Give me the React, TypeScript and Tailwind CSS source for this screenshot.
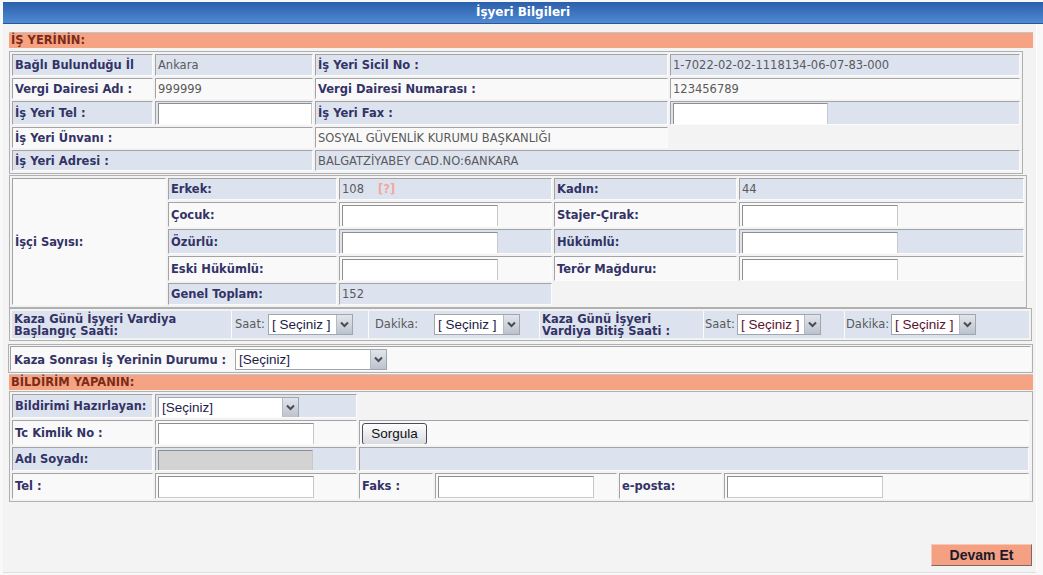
import React from "react";

const CB =
  "flex items-center border border-t-[#a3a3a3] border-l-[#a3a3a3] border-b-[#fbfbfb] border-r-[#fbfbfb] pl-[2px] pt-[2px] overflow-hidden whitespace-nowrap";
const BL = "bg-[#dce3ef]";
const WH = "bg-[#f9f9f9]";
const LBL = "font-bold text-[#333366]";
const VAL = "text-[#5a5a5a]";

function TextBox({ className }: { className: string }) {
  return (
    <div
      className={`border border-t-[#8e8e8e] border-l-[#8e8e8e] border-b-[#c8c8c8] border-r-[#c8c8c8] ${className}`}
    />
  );
}

function Select({
  className,
  text,
  color,
}: {
  className: string;
  text: string;
  color: string;
}) {
  return (
    <div className={`flex h-[21px] items-stretch border border-[#9fa6b0] bg-white ${className}`}>
      <span
        className={`flex-1 pl-[3px] leading-[19px] text-[13.5px] font-['Liberation_Sans',Arial,sans-serif] whitespace-nowrap overflow-hidden ${color}`}
      >
        {text}
      </span>
      <span className="w-[16px] flex items-center justify-center bg-gradient-to-b from-[#e2e5eb] to-[#bcc2cc] border-l border-[#b5bbc4]">
        <svg width="9" height="7" viewBox="0 0 9 7">
          <polyline points="1,1.5 4.5,5 8,1.5" fill="none" stroke="#4a4a58" strokeWidth="2" />
        </svg>
      </span>
    </div>
  );
}

function Orange({ text }: { text: string }) {
  return (
    <div className="ml-[6px] w-[1024px] h-[16px] border-t border-t-[#c4c4c4] bg-[#f6a383] pl-[2px] leading-[15px] font-bold text-[#7b2b18]">
      {text}
    </div>
  );
}

export default function App() {
  return (
    <div className="w-[1043px] h-[575px] bg-[#f8f8f8] font-['DejaVu_Sans',Verdana,sans-serif] text-[11.5px] overflow-hidden">
      {/* header */}
      <div className="ml-[3px] mt-[2px] h-[22px] bg-gradient-to-b from-[#2c5fab] to-[#4f8ad3] border-b border-b-[#2a5596] text-center leading-[21px] font-bold text-[12px] text-white">
        İşyeri Bilgileri
      </div>

      <div className="ml-[3px] w-[1034px] h-[549px] bg-[#f3f3f3] border-r border-r-white border-b border-b-[#e0e0e0] pt-[8px]">
        <Orange text="İŞ YERİNİN:" />

        {/* table 1 */}
        <div className="ml-[6px] mt-[3px] w-[1014px] border border-[#b0b0b0] p-[2px]">
          <div className="grid grid-cols-[141px_158px_353px_350px] gap-[2px]">
            <div className={`${CB} ${BL} h-[22px] ${LBL}`}>Bağlı Bulunduğu İl</div>
            <div className={`${CB} ${BL} h-[22px] ${VAL}`}>Ankara</div>
            <div className={`${CB} ${BL} h-[22px] ${LBL}`}>İş Yeri Sicil No :</div>
            <div className={`${CB} ${BL} h-[22px] ${VAL}`}>1-7022-02-02-1118134-06-07-83-000</div>

            <div className={`${CB} ${WH} h-[21px] ${LBL}`}>Vergi Dairesi Adı :</div>
            <div className={`${CB} ${WH} h-[21px] ${VAL}`}>999999</div>
            <div className={`${CB} ${WH} h-[21px] ${LBL}`}>Vergi Dairesi Numarası :</div>
            <div className={`${CB} ${WH} h-[21px] ${VAL}`}>123456789</div>

            <div className={`${CB} ${BL} h-[24px] ${LBL}`}>İş Yeri Tel :</div>
            <div className={`${CB} ${BL} h-[24px] pl-[1px] pt-0`}>
              <TextBox className="w-[155px] h-[22px] bg-white" />
            </div>
            <div className={`${CB} ${BL} h-[24px] ${LBL}`}>İş Yeri Fax :</div>
            <div className={`${CB} ${BL} h-[24px] pl-[1px] pt-0`}>
              <TextBox className="w-[155px] h-[22px] bg-white" />
            </div>

            <div className={`${CB} ${WH} h-[21px] col-span-2 ${LBL}`}>İş Yeri Ünvanı :</div>
            <div className={`${CB} ${WH} h-[21px] ${VAL}`}>SOSYAL GÜVENLİK KURUMU BAŞKANLIĞI</div>
            <div className="h-[21px]" />

            <div className={`${CB} ${BL} h-[21px] col-span-2 ${LBL}`}>İş Yeri Adresi :</div>
            <div className={`${CB} ${BL} h-[21px] col-span-2 ${VAL}`}>BALGATZİYABEY CAD.NO:6ANKARA</div>
          </div>
        </div>

        {/* table 2 */}
        <div className="ml-[6px] mt-[1px] w-[1018px] border border-[#b0b0b0] p-[2px]">
          <div className="grid grid-cols-[154px_169px_213px_183px_285px] gap-[2px]">
            <div className={`${CB} ${WH} row-span-5 ${LBL}`}>İşçi Sayısı:</div>

            <div className={`${CB} ${BL} h-[22px] ${LBL}`}>Erkek:</div>
            <div className={`${CB} ${BL} h-[22px] ${VAL}`}>
              108<span className="ml-[14px] font-bold text-[#f2a7a0]">[?]</span>
            </div>
            <div className={`${CB} ${BL} h-[22px] ${LBL}`}>Kadın:</div>
            <div className={`${CB} ${BL} h-[22px] ${VAL}`}>44</div>

            <div className={`${CB} ${WH} h-[25px] ${LBL}`}>Çocuk:</div>
            <div className={`${CB} ${WH} h-[25px] pl-[1px] pt-0`}>
              <TextBox className="w-[156px] h-[22px] bg-white" />
            </div>
            <div className={`${CB} ${WH} h-[25px] ${LBL}`}>Stajer-Çırak:</div>
            <div className={`${CB} ${WH} h-[25px] pl-[1px] pt-0`}>
              <TextBox className="w-[156px] h-[22px] bg-white" />
            </div>

            <div className={`${CB} ${BL} h-[25px] ${LBL}`}>Özürlü:</div>
            <div className={`${CB} ${BL} h-[25px] pl-[1px] pt-0`}>
              <TextBox className="w-[156px] h-[22px] bg-white" />
            </div>
            <div className={`${CB} ${BL} h-[25px] ${LBL}`}>Hükümlü:</div>
            <div className={`${CB} ${BL} h-[25px] pl-[1px] pt-0`}>
              <TextBox className="w-[156px] h-[22px] bg-white" />
            </div>

            <div className={`${CB} ${WH} h-[25px] ${LBL}`}>Eski Hükümlü:</div>
            <div className={`${CB} ${WH} h-[25px] pl-[1px] pt-0`}>
              <TextBox className="w-[156px] h-[22px] bg-white" />
            </div>
            <div className={`${CB} ${WH} h-[25px] ${LBL}`}>Terör Mağduru:</div>
            <div className={`${CB} ${WH} h-[25px] pl-[1px] pt-0`}>
              <TextBox className="w-[156px] h-[22px] bg-white" />
            </div>

            <div className={`${CB} ${BL} h-[22px] ${LBL}`}>Genel Toplam:</div>
            <div className={`${CB} ${BL} h-[22px] ${VAL}`}>152</div>
            <div className="col-span-2 h-[22px]" />
          </div>
        </div>

        {/* kaza günü row */}
        <div className="ml-[6px] w-[1023px] border border-[#b0b0b0] p-[2px]">
          <div className="grid grid-cols-[219px_136px_170px_163px_140px_184px] gap-[1px] bg-[#fbfbfb]">
            <div className={`flex items-center ${BL} h-[27px] pl-[2px] ${LBL} leading-[12px]`}>
              <span>
                Kaza Günü İşyeri Vardiya
                <br />
                Başlangıç Saati:
              </span>
            </div>
            <div className={`flex items-center ${BL} h-[27px] pl-[3px]`}>
              <span className={`${VAL} w-[33px]`}>Saat:</span>
              <Select className="w-[85px]" text="[ Seçiniz ]" color="text-[#1c1c48]" />
            </div>
            <div className={`flex items-center ${BL} h-[27px] pl-[6px]`}>
              <span className={`${VAL} w-[59px]`}>Dakika:</span>
              <Select className="w-[86px]" text="[ Seçiniz ]" color="text-[#1c1c48]" />
            </div>
            <div className={`flex items-center ${BL} h-[27px] pl-[2px] ${LBL} leading-[12px]`}>
              <span>
                Kaza Günü İşyeri
                <br />
                Vardiya Bitiş Saati :
              </span>
            </div>
            <div className={`flex items-center ${BL} h-[27px] pl-[1px]`}>
              <span className={`${VAL} w-[32px]`}>Saat:</span>
              <Select className="w-[84px]" text="[ Seçiniz ]" color="text-[#5a1030]" />
            </div>
            <div className={`flex items-center ${BL} h-[27px] pl-[1px]`}>
              <span className={`${VAL} w-[45px]`}>Dakika:</span>
              <Select className="w-[85px]" text="[ Seçiniz ]" color="text-[#5a1030]" />
            </div>
          </div>
        </div>

        {/* kaza sonrası */}
        <div className="ml-[5px] mt-[3px] w-[1025px] border border-[#b0b0b0] p-[1px]">
          <div className={`${CB} ${WH} h-[25px] pl-[3px] pt-0`}>
            <span className={`${LBL} w-[221px] pt-[2px]`}>Kaza Sonrası İş Yerinin Durumu :</span>
            <Select className="w-[152px]" text="[Seçiniz]" color="text-[#1c1c48]" />
          </div>
        </div>

        <div className="mt-[1px]">
          <Orange text="BİLDİRİM YAPANIN:" />
        </div>

        {/* table 3 */}
        <div className="ml-[6px] mt-[1px] w-[1024px] border border-[#b0b0b0] p-[2px]">
          <div className="grid grid-cols-[141px_202px_74px_182px_103px_305px] gap-[2px]">
            <div className={`${CB} ${BL} h-[24px] ${LBL}`}>Bildirimi Hazırlayan:</div>
            <div className={`${CB} ${BL} h-[24px] pl-[1px] pt-0`}>
              <Select className="w-[141px]" text="[Seçiniz]" color="text-[#1c1c48]" />
            </div>
            <div className="col-span-4 h-[24px]" />

            <div className={`${CB} ${WH} h-[25px] ${LBL}`}>Tc Kimlik No :</div>
            <div className={`${CB} ${WH} h-[25px] pl-[0px] pt-0`}>
              <TextBox className="w-[156px] h-[22px] bg-white" />
            </div>
            <div className={`${CB} ${WH} h-[25px] col-span-4 pl-[0px] pt-0`}>
              <button className="w-[65px] h-[22px] rounded-[3px] border border-[#4a4a5a] bg-gradient-to-b from-[#fdfdfd] to-[#d9dbe3] text-[13.5px] font-['Liberation_Sans',Arial,sans-serif] text-[#111]">
                Sorgula
              </button>
            </div>

            <div className={`${CB} ${BL} h-[24px] ${LBL}`}>Adı Soyadı:</div>
            <div className={`${CB} ${BL} h-[24px] pl-[0px] pt-0`}>
              <TextBox className="w-[155px] h-[21px] bg-[#d3d3d3]" />
            </div>
            <div className={`${CB} ${BL} h-[24px] col-span-4`} />

            <div className={`${CB} ${WH} h-[26px] ${LBL}`}>Tel :</div>
            <div className={`${CB} ${WH} h-[26px] pl-[0px] pt-0`}>
              <TextBox className="w-[156px] h-[22px] bg-white" />
            </div>
            <div className={`${CB} ${WH} h-[26px] ${LBL}`}>Faks :</div>
            <div className={`${CB} ${WH} h-[26px] pl-[0px] pt-0`}>
              <TextBox className="w-[156px] h-[22px] bg-white" />
            </div>
            <div className={`${CB} ${WH} h-[26px] ${LBL}`}>e-posta:</div>
            <div className={`${CB} ${WH} h-[26px] pl-[0px] pt-0`}>
              <TextBox className="w-[156px] h-[22px] bg-white" />
            </div>
          </div>
        </div>

        <div className="mt-[42px] flex justify-end pr-[4px]">
          <button className="w-[101px] h-[22px] bg-[#f5a083] border border-t-[#f9c8b4] border-l-[#f9c8b4] border-b-[#7a6a66] border-r-[#7a6a66] font-bold text-[14px] font-['Liberation_Sans',Arial,sans-serif] text-[#1a1a2a]">
            Devam Et
          </button>
        </div>
      </div>
    </div>
  );
}
